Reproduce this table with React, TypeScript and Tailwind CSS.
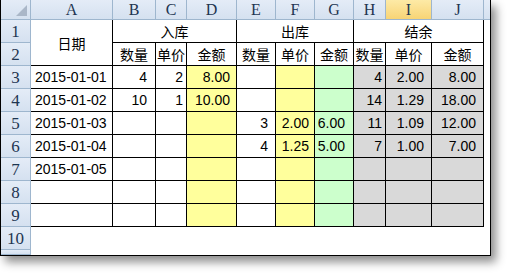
import React from "react";

const HB = "border-[#9eb6ce]";
const hdrBg = "bg-gradient-to-b from-[#e4ecf7] to-[#d5e1f0]";
const num = "font-['Liberation_Sans',Arial,sans-serif] text-[14px]";
const cjk = "font-['Noto_Sans_CJK_SC','Noto_Sans',sans-serif] text-[14px]";

function H({ children, sel }: { children?: React.ReactNode; sel?: boolean }) {
  return (
    <div
      className={`flex items-center justify-center border-r border-b ${HB} ${
        sel ? "bg-gradient-to-b from-[#fdeaa6] to-[#f8d475]" : hdrBg
      } font-['Liberation_Serif',serif] text-[16px] text-[#1e3551] leading-none`}
    >
      {children}
    </div>
  );
}

function R({ n }: { n?: number }) {
  return (
    <div
      className={`flex items-center justify-center border-r border-b ${HB} ${hdrBg} font-['Liberation_Serif',serif] text-[17px] text-[#1e3551] leading-none overflow-hidden`}
    >
      {n}
    </div>
  );
}

function C({
  children,
  bg = "bg-white",
  cls = "",
  font = num,
}: {
  children?: React.ReactNode;
  bg?: string;
  cls?: string;
  font?: string;
}) {
  return (
    <div
      className={`flex items-center border-r border-b border-black ${bg} ${font} text-black leading-none whitespace-nowrap ${cls}`}
    >
      {children}
    </div>
  );
}

const Y = "bg-[#ffff9c]";
const G = "bg-[#ccffcc]";
const S = "bg-[#d9d9d9]";

type Row = {
  a?: string;
  b?: string;
  c?: string;
  d?: string;
  e?: string;
  f?: string;
  g?: string;
  h?: string;
  i?: string;
  j?: string;
};

const rows: Row[] = [
  { a: "2015-01-01", b: "4", c: "2", d: "8.00", h: "4", i: "2.00", j: "8.00" },
  { a: "2015-01-02", b: "10", c: "1", d: "10.00", h: "14", i: "1.29", j: "18.00" },
  { a: "2015-01-03", e: "3", f: "2.00", g: "6.00", h: "11", i: "1.09", j: "12.00" },
  { a: "2015-01-04", e: "4", f: "1.25", g: "5.00", h: "7", i: "1.00", j: "7.00" },
  { a: "2015-01-05" },
  {},
  {},
];

export default function App() {
  return (
    <div className="w-[512px] h-[278px] bg-white overflow-hidden">
      <div className="w-[491px] h-[256px] border-l border-r border-b border-black bg-white shadow-[5px_6px_9px_rgba(0,0,0,0.45)] overflow-hidden">
        <div className="grid grid-cols-[30px_82px_43px_31px_50px_39px_39px_39px_32px_46px_52px_6px] grid-rows-[20px_repeat(10,23px)_5px]">
          {/* header row */}
          <div className={`relative border-r border-b ${HB} ${hdrBg}`}>
            <div className="absolute right-[3px] bottom-[3px] w-0 h-0 border-l-[11px] border-l-transparent border-b-[11px] border-b-[#aab7c8]" />
          </div>
          <H>A</H>
          <H>B</H>
          <H>C</H>
          <H>D</H>
          <H>E</H>
          <H>F</H>
          <H>G</H>
          <H>H</H>
          <H sel>I</H>
          <H>J</H>
          <div className={`border-b ${HB} ${hdrBg}`} />

          {/* row 1 */}
          <R n={1} />
          <C font={cjk} cls="row-span-2 justify-center">日期</C>
          <C font={cjk} cls="col-span-3 justify-center">入库</C>
          <C font={cjk} cls="col-span-3 justify-center">出库</C>
          <C font={cjk} cls="col-span-3 justify-center">结余</C>
          <div />

          {/* row 2 */}
          <R n={2} />
          <C font={cjk} cls="justify-center">数量</C>
          <C font={cjk} cls="justify-center">单价</C>
          <C font={cjk} cls="justify-center">金额</C>
          <C font={cjk} cls="justify-center">数量</C>
          <C font={cjk} cls="justify-center">单价</C>
          <C font={cjk} cls="justify-center">金额</C>
          <C font={cjk} cls="justify-center">数量</C>
          <C font={cjk} cls="justify-center">单价</C>
          <C font={cjk} cls="justify-center">金额</C>
          <div />

          {rows.map((r, k) => (
            <React.Fragment key={k}>
              <R n={k + 3} />
              <C cls="pl-[4px]">{r.a}</C>
              <C cls="justify-end pr-[8px]">{r.b}</C>
              <C cls="justify-end pr-[3px]">{r.c}</C>
              <C bg={Y} cls="justify-end pr-[6px]">{r.d}</C>
              <C cls="justify-end pr-[7px]">{r.e}</C>
              <C bg={Y} cls="justify-end pr-[5px]">{r.f}</C>
              <C bg={G} cls="justify-end pr-[8px]">{r.g}</C>
              <C bg={S} cls="justify-end pr-[3px]">{r.h}</C>
              <C bg={S} cls="justify-end pr-[7px]">{r.i}</C>
              <C bg={S} cls="justify-end pr-[7px]">{r.j}</C>
              <div />
            </React.Fragment>
          ))}

          {/* row 10 */}
          <R n={10} />
          <div className="col-span-11 bg-white" />

          {/* row 11 partial */}
          <R />
          <div className="col-span-11 bg-white" />
        </div>
      </div>
    </div>
  );
}
